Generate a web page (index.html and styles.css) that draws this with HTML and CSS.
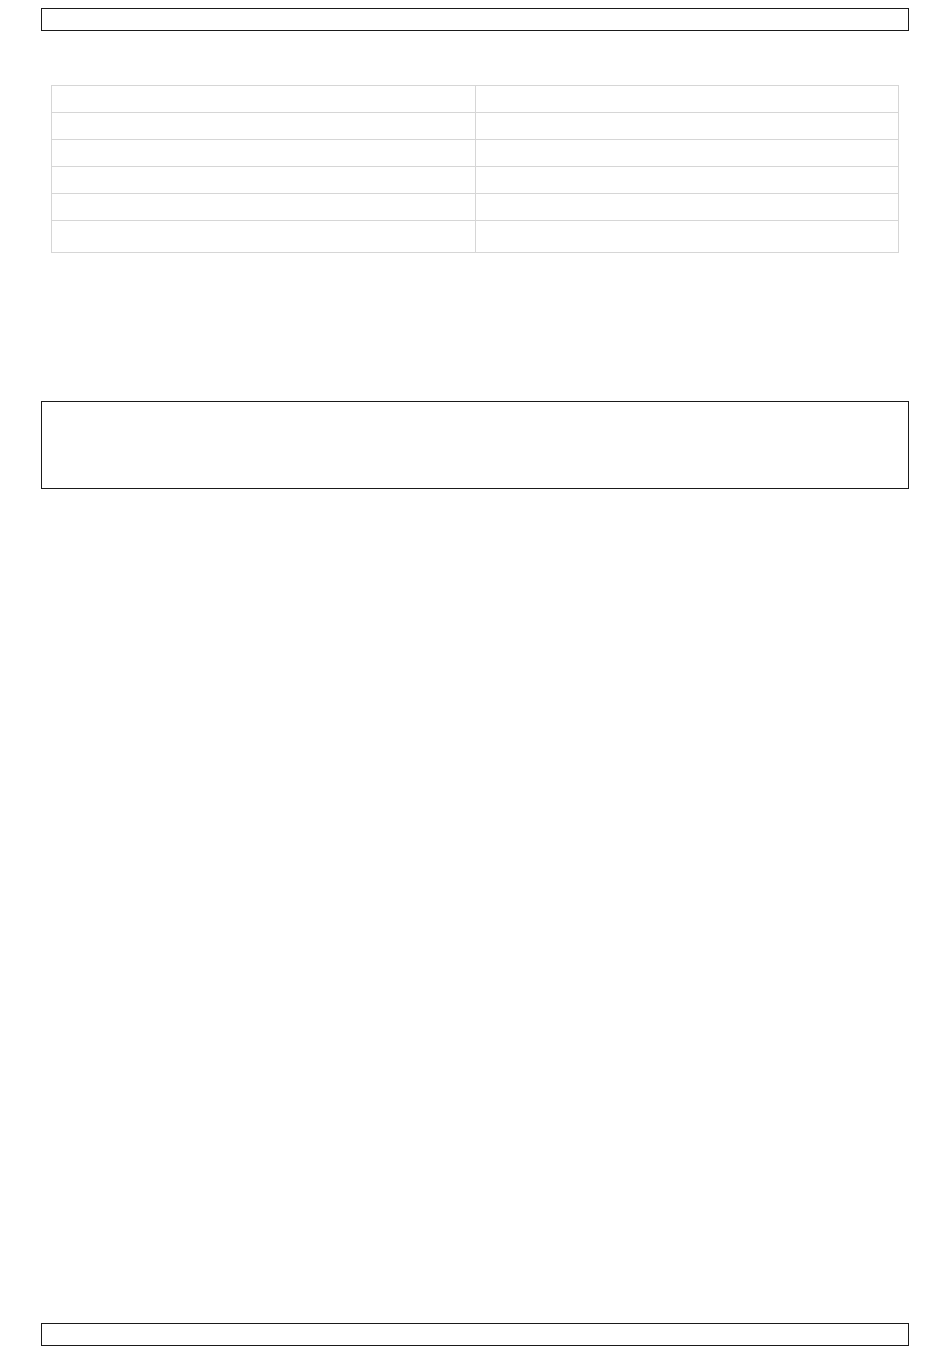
FILE: index.html
```html
<!DOCTYPE html>
<html lang="en">
<head>
  <meta charset="UTF-8" />
  <meta name="viewport" content="width=device-width, initial-scale=1.0" />
  <title>Page</title>
  <link rel="stylesheet" href="styles.css">
</head>
<body>
  <div class="page">
    <div class="box header-box"></div>

    <table class="info-table">
      <tr><td></td><td></td></tr>
      <tr><td></td><td></td></tr>
      <tr><td></td><td></td></tr>
      <tr><td></td><td></td></tr>
      <tr><td></td><td></td></tr>
      <tr class="last-row"><td></td><td></td></tr>
    </table>

    <div class="box notes-box"></div>

    <div class="box footer-box"></div>
  </div>
</body>
</html>
```

FILE: styles.css
```css
* {
  box-sizing: border-box;
  margin: 0;
  padding: 0;
}

body {
  background: #ffffff;
  font-family: 'Liberation Sans', Arial, sans-serif;
}

.page {
  width: 868px;
  margin: 0 auto;
  min-height: 100vh;
  padding-top: 8px;
  padding-bottom: 13px;
  display: flex;
  flex-direction: column;
}

.box {
  border: 1px solid #1a1a1a;
  background: #ffffff;
}

.header-box {
  height: 23px;
}

.info-table {
  margin: 54px 10px 0;
  border-collapse: collapse;
  table-layout: fixed;
  width: 848px;
}

.info-table td {
  border: 1px solid #d6d6d6;
  height: 27px;
  width: 50%;
}

.info-table .last-row td {
  height: 32px;
}

.notes-box {
  margin-top: 148px;
  height: 88px;
}

.footer-box {
  margin-top: auto;
  height: 23px;
}
```
